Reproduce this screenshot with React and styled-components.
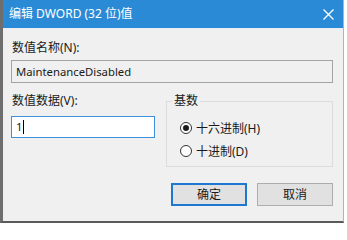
import React from "react";
import styled, { createGlobalStyle } from "styled-components";

const GlobalStyle = createGlobalStyle`
  body {
    margin: 0;
    background: #ffffff;
    font-family: "Noto Sans", "Noto Sans CJK SC", sans-serif;
    font-size: 12px;
    color: #1a1a1a;
  }
`;

function App() {
  return (
    <>
      <GlobalStyle />
      <DialogWindow>
        <TitleBar>
          <TitleText>编辑 DWORD (32 位)值</TitleText>
          <CloseIcon width="11" height="11" viewBox="0 0 11 11">
            <path d="M0.5 0.5 L10.5 10.5 M10.5 0.5 L0.5 10.5" stroke="#ffffff" strokeWidth="1.3" />
          </CloseIcon>
        </TitleBar>
        <DialogBody>
          <FieldLabel>数值名称(N):</FieldLabel>
          <TextBox $readOnly>MaintenanceDisabled</TextBox>
          <MiddleRow>
            <DataColumn>
              <FieldLabel>数值数据(V):</FieldLabel>
              <TextBox $focused>
                1<Caret />
              </TextBox>
            </DataColumn>
            <GroupBox>
              <GroupLegend>基数</GroupLegend>
              <RadioList>
                <RadioRow>
                  <RadioCircle $checked />
                  十六进制(H)
                </RadioRow>
                <RadioRow>
                  <RadioCircle />
                  十进制(D)
                </RadioRow>
              </RadioList>
            </GroupBox>
          </MiddleRow>
          <ButtonRow>
            <DialogButton $primary>确定</DialogButton>
            <DialogButton>取消</DialogButton>
          </ButtonRow>
        </DialogBody>
      </DialogWindow>
    </>
  );
}

export default App;

const DialogWindow = styled.div`
  width: 340px;
  background: #f0f0f0;
  border-left: 3px solid #6e6e6e;
  border-right: 1px solid #b4b4b4;
  border-bottom: 2px solid #5a5a5a;
`;

const TitleBar = styled.div`
  height: 29px;
  display: flex;
  align-items: center;
  justify-content: space-between;
  padding: 0 9px 0 6px;
  background: #2b8ad6;
  border-bottom: 1px solid #e8eef4;
  box-sizing: border-box;
`;

const TitleText = styled.span`
  color: #ffffff;
  font-size: 12px;
  line-height: 16px;
`;

const CloseIcon = styled.svg`
  display: block;
`;

const DialogBody = styled.div`
  padding: 11px 10px 15px 8px;
`;

const FieldLabel = styled.div`
  line-height: 16px;
  font-size: 12px;
  margin-left: 1px;
`;

const TextBox = styled.div`
  box-sizing: border-box;
  height: ${(p) => (p.$readOnly ? "23px" : "22px")};
  margin-top: ${(p) => (p.$readOnly ? "4px" : "7px")};
  display: flex;
  align-items: center;
  padding-left: 4px;
  background: ${(p) => (p.$readOnly ? "#f0f0f0" : "#ffffff")};
  border: 1px solid ${(p) => (p.$focused ? "#3c8fd8" : "#a3a3a3")};
  font-size: 11.3px;
  line-height: 16px;
`;

const Caret = styled.span`
  width: 1px;
  height: 14px;
  margin-left: 1px;
  background: #000000;
`;

const MiddleRow = styled.div`
  display: flex;
  gap: 11px;
  margin-top: 10px;
`;

const DataColumn = styled.div`
  width: 144px;
`;

const GroupBox = styled.fieldset`
  width: 167px;
  box-sizing: border-box;
  margin: 0;
  padding: 0 0 4px 13px;
  border: 1px solid #dcdcdc;
  min-width: 0;
`;

const GroupLegend = styled.legend`
  padding: 0 2px;
  margin-left: -8px;
  line-height: 16px;
`;

const RadioList = styled.div`
  padding-top: 7px;
`;

const RadioRow = styled.div`
  height: 23px;
  display: flex;
  align-items: center;
  gap: 4px;
`;

const RadioCircle = styled.span`
  width: 12px;
  height: 12px;
  box-sizing: border-box;
  border: 1px solid #333333;
  border-radius: 50%;
  background: #ffffff;
  display: flex;
  align-items: center;
  justify-content: center;

  &::after {
    content: "";
    width: 6px;
    height: 6px;
    border-radius: 50%;
    background: ${(p) => (p.$checked ? "#1a1a1a" : "transparent")};
  }
`;

const ButtonRow = styled.div`
  display: flex;
  justify-content: flex-end;
  gap: 10px;
  margin-top: 16px;
`;

const DialogButton = styled.div`
  width: 76px;
  height: 23px;
  box-sizing: border-box;
  display: flex;
  align-items: center;
  justify-content: center;
  background: #e1e1e1;
  border: ${(p) => (p.$primary ? "2px solid #1f78cf" : "1px solid #adadad")};
  line-height: 16px;
`;
